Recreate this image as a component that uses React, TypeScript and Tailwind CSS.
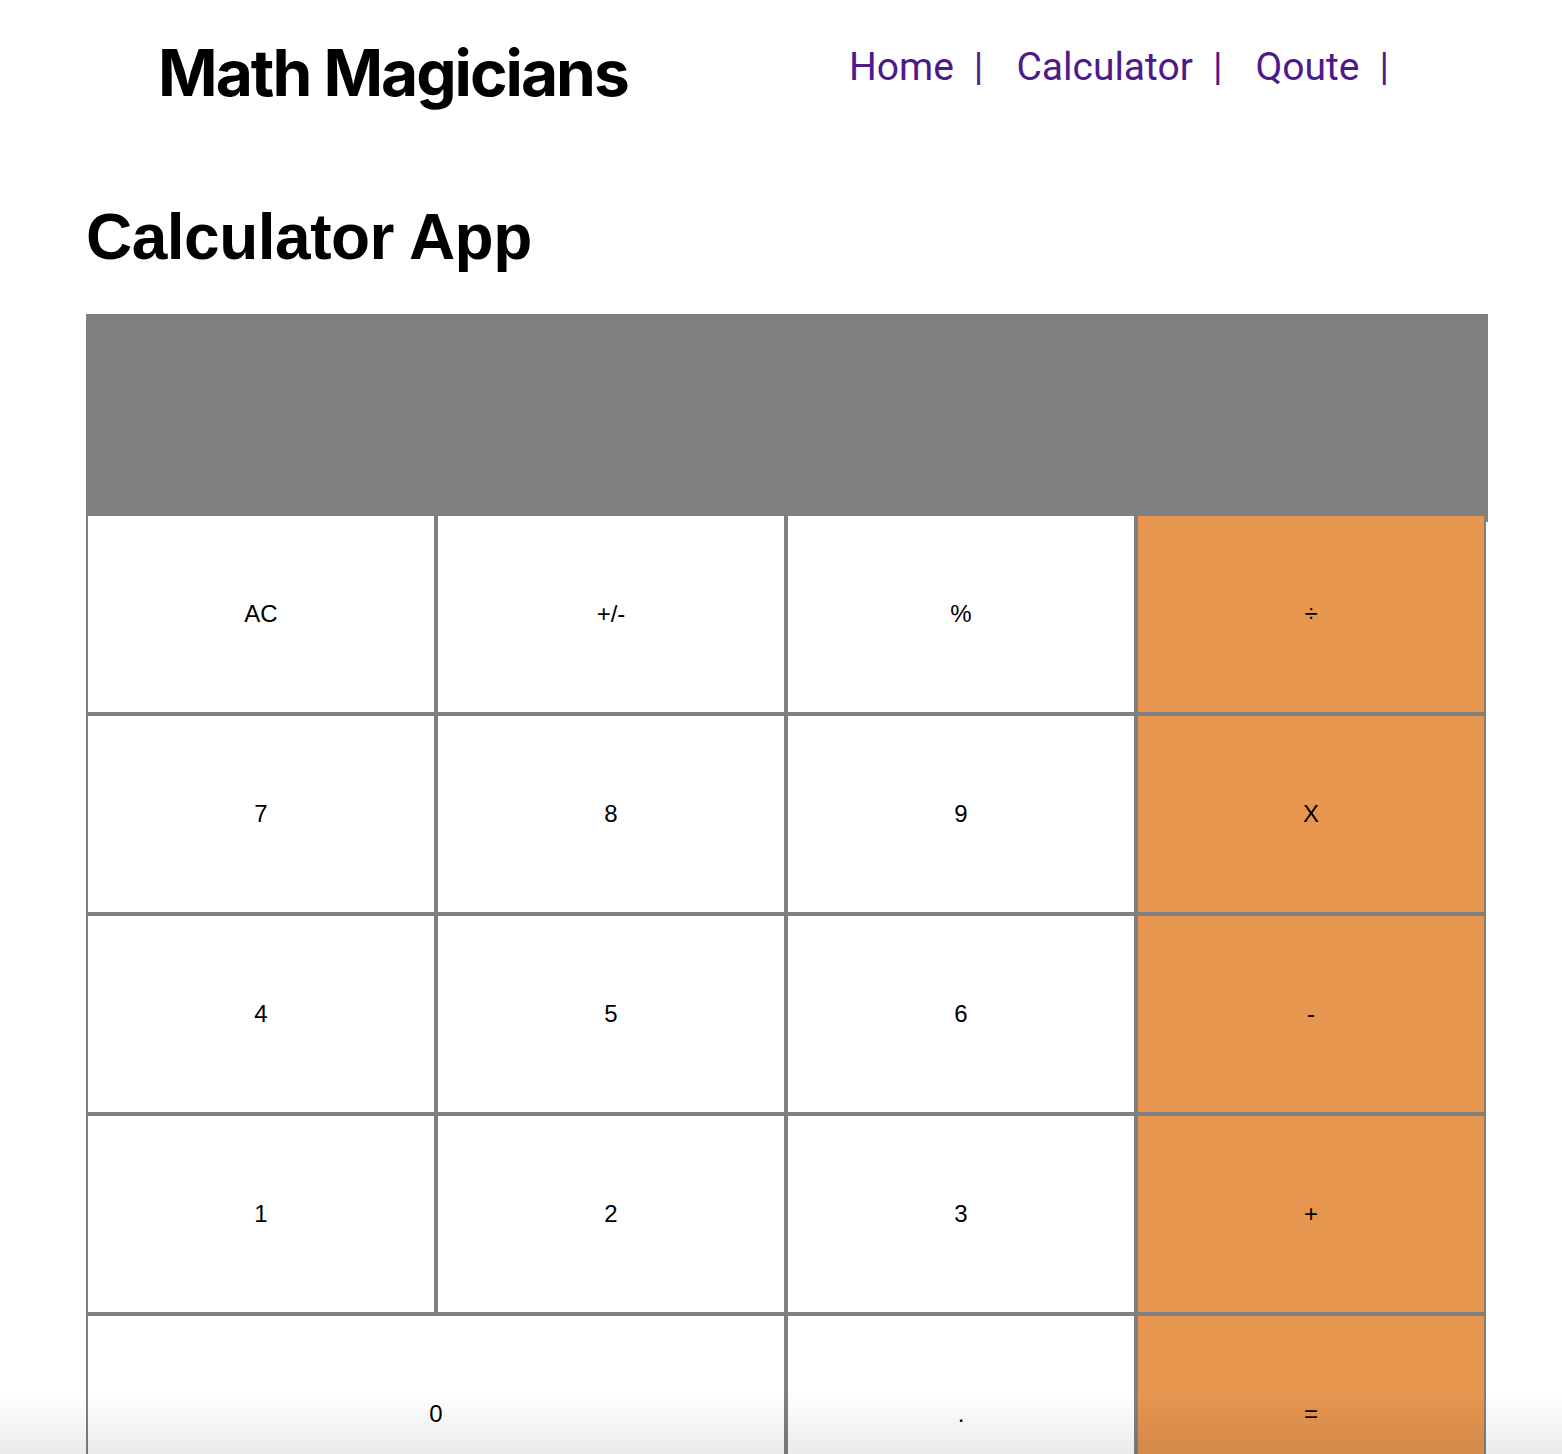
import React from 'react';

interface Key {
  label: string;
  wide?: boolean;
  op?: boolean;
}

const keys: Key[] = [
  { label: 'AC' },
  { label: '+/-' },
  { label: '%' },
  { label: '÷', op: true },
  { label: '7' },
  { label: '8' },
  { label: '9' },
  { label: 'X', op: true },
  { label: '4' },
  { label: '5' },
  { label: '6' },
  { label: '-', op: true },
  { label: '1' },
  { label: '2' },
  { label: '3' },
  { label: '+', op: true },
  { label: '0', wide: true },
  { label: '.' },
  { label: '=', op: true },
];

const links = ['Home', 'Calculator', 'Qoute'];

const Header: React.FC = () => (
  <header className="flex items-start">
    <h1 className="ml-[158px] mt-[41px] text-[64px] leading-none font-bold text-black font-['Inter',sans-serif] tracking-[-2px]">
      Math Magicians
    </h1>
    <nav className="ml-auto mr-[173px] mt-[48px]">
      <ul className="flex font-['Roboto',sans-serif] text-[39px] leading-none text-[#4e1a8a]">
        {links.map((link, index) => (
          <li key={link} className="flex">
            <a href="#" className="no-underline">{link}</a>
            <span className={`ml-[20px] ${index < links.length - 1 ? 'mr-[33px]' : ''}`}>|</span>
          </li>
        ))}
      </ul>
    </nav>
  </header>
);

const Calculator: React.FC = () => (
  <section className="ml-[86px] w-[1402px]">
    <h2 className="mt-[100px] text-[64px] leading-none font-bold text-black font-['Liberation_Sans',Arial,sans-serif] tracking-[-0.5px]">
      Calculator App
    </h2>
    <div className="mt-[45px] h-[208px] w-[1402px] bg-[#808080]" />
    <div className="relative -mt-[8px] grid w-[1400px] grid-cols-4">
      {keys.map(key => (
        <button
          key={key.label}
          type="button"
          className={`flex h-[200px] items-center justify-center border-2 border-[#808080] pb-[1px] font-['Liberation_Sans',Arial,sans-serif] text-[24px] leading-none text-black ${
            key.wide ? 'col-span-2' : ''
          } ${key.op ? 'bg-[#e6964f]' : 'bg-white'}`}
        >
          {key.label}
        </button>
      ))}
    </div>
  </section>
);

export default function App() {
  return (
    <div className="min-h-screen bg-white">
      <Header />
      <Calculator />
      {/* soft fade at the bottom edge of the window */}
      <div className="pointer-events-none fixed inset-x-0 bottom-0 h-[60px] bg-gradient-to-b from-transparent to-black/[0.08]" />
    </div>
  );
}
